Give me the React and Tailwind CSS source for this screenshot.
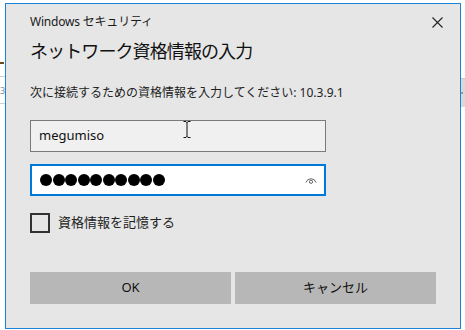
export default function App() {
  const font = { fontFamily: '"Noto Sans", "Noto Sans CJK JP", sans-serif' };
  return (
    <div className="w-[465px] h-[330px] bg-white flex overflow-hidden relative" style={font}>
      {/* left background strip */}
      <div className="w-[5px] shrink-0 flex flex-col">
        <div className="mt-[62px] h-[2px] w-[4px] bg-[#6b4a1a]" />
        <div className="mt-[12px] h-[1px] w-[5px] bg-[#cfcfcf]" />
        <div className="mt-[8px] text-[9px] leading-[12px] text-[#888]">3</div>
        <div className="mt-[6px] h-[1px] w-[5px] bg-[#cfcfcf]" />
      </div>
      {/* dialog */}
      <div className="mt-[3px] w-[456px] h-[326px] shrink-0 border border-[#1883d7] bg-[#e6e6e6] flex flex-col px-[24px] relative">
        <div className="flex items-center justify-between h-[30px] mt-[3px]">
          <span className="text-[12px] text-[#1a1a1a] tracking-[-0.2px]">Windows セキュリティ</span>
          <svg width="11" height="11" viewBox="0 0 11 11" className="mr-[-7px]">
            <path d="M0.5 0.5 L10.5 10.5 M10.5 0.5 L0.5 10.5" stroke="#222" strokeWidth="1.1" />
          </svg>
        </div>
        <div className="mt-[1px] h-[26px] flex items-center text-[18px] text-[#111] tracking-[-0.9px]">
          ネットワーク資格情報の入力
        </div>
        <div className="mt-[21px] h-[16px] flex items-center text-[12px] text-[#222]">
          次に接続するための資格情報を入力してください: 10.3.9.1
        </div>
        <div className="mt-[19px] w-[296px] h-[32px] bg-[#f0f0f0] border border-[#7a7a7a] flex items-center pl-[8px] text-[13px] text-[#111]">
          megumiso
        </div>
        <div className="mt-[12px] w-[296px] h-[32px] bg-white border-2 border-[#0078d7] flex items-center pl-[8px] pr-[7px] justify-between">
          <div className="flex gap-[0.5px]">
            {Array.from({ length: 10 }).map((_, i) => (
              <div key={i} className="w-[12px] h-[12px] rounded-full bg-black" />
            ))}
          </div>
          <svg width="12" height="8" viewBox="0 0 12 8">
            <path d="M1 6.5 A5.2 5.2 0 0 1 11 6.5" fill="none" stroke="#666" strokeWidth="1" />
            <circle cx="6" cy="5.8" r="1.6" fill="none" stroke="#666" strokeWidth="1" />
          </svg>
        </div>
        <div className="mt-[17px] flex items-center h-[20px]">
          <div className="w-[20px] h-[20px] border-2 border-[#333]" />
          <span className="ml-[8px] text-[13px] text-[#222]">資格情報を記憶する</span>
        </div>
        <div className="mt-[39px] flex gap-[4px]">
          <div className="w-[201px] h-[32px] bg-[#b7b7b7] flex items-center justify-center text-[13px] text-[#111]">OK</div>
          <div className="w-[201px] h-[32px] bg-[#b7b7b7] flex items-center justify-center text-[13px] text-[#111]">キャンセル</div>
        </div>
        {/* mouse I-beam cursor */}
        <svg width="8" height="17" viewBox="0 0 8 17" className="absolute left-[177px] top-[117px]">
          <path d="M0.5 0.5 H3 M5 0.5 H7.5 M4 1 V16 M0.5 16.5 H3 M5 16.5 H7.5 M3 0.5 L4 1.5 L5 0.5 M3 16.5 L4 15.5 L5 16.5" stroke="#111" strokeWidth="1" fill="none" />
        </svg>
      </div>
      {/* right background strip */}
      <div className="w-[4px] shrink-0 flex flex-col">
        <div className="mt-[78px] h-[29px] w-[4px] bg-[#d9d9d9] border-t border-[#c8c8c8] flex items-center">
          <div className="w-[2px] h-[2px] bg-[#999] ml-[0px]" />
        </div>
      </div>
    </div>
  );
}
